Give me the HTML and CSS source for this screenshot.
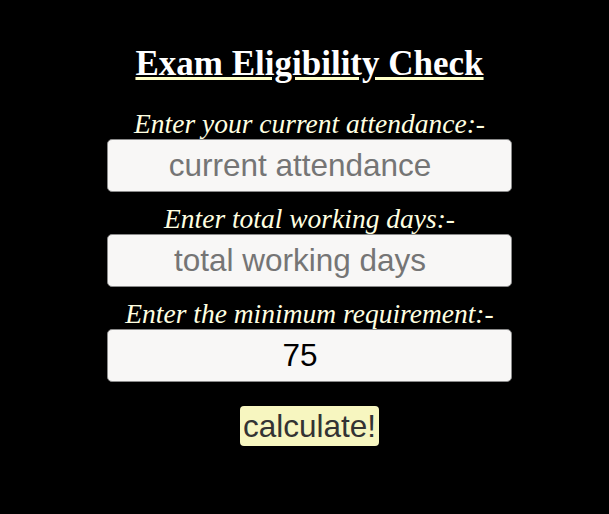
FILE: index.html
```html
<!DOCTYPE html>
<html>
<head>
<meta charset="utf-8">
<link rel="stylesheet" href="styles.css">
</head>
<body>
<div class="page">
  <h1 class="title">Exam Eligibility Check</h1>
  <label class="label">Enter your current attendance:-</label>
  <input class="field" type="text" placeholder="current attendance">
  <label class="label">Enter total working days:-</label>
  <input class="field" type="text" placeholder="total working days">
  <label class="label">Enter the minimum requirement:-</label>
  <input class="field" type="text" value="75">
  <button class="btn">calculate!</button>
</div>
</body>
</html>
```

FILE: styles.css
```css
html, body {
  margin: 0;
  padding: 0;
  background: #000;
}
.page {
  display: flex;
  flex-direction: column;
  align-items: center;
  padding: 44px 0 0 10px;
  font-family: "Liberation Serif", "Times New Roman", serif;
}
.title {
  margin: 0 0 25px;
  font-size: 35px;
  font-weight: bold;
  color: #fff;
  text-decoration: underline;
  text-decoration-color: #ffffc8;
  line-height: 40px;
}
.label {
  display: block;
  font-style: italic;
  font-size: 27.5px;
  line-height: 30px;
  color: #ffffe0;
}
.field {
  box-sizing: border-box;
  width: 405px;
  height: 53px;
  margin: 0 0 12px;
  background: #f8f7f6;
  border: 1px solid #8a8a8a;
  border-radius: 5px;
  font-family: "Liberation Sans", Arial, sans-serif;
  font-size: 31.5px;
  text-align: center;
  color: #000;
  padding: 0 21px 0 2px;
}
.field::placeholder {
  color: #757575;
}
.btn {
  margin-top: 12px;
  background: #f7f6c0;
  border: none;
  border-radius: 4px;
  font-family: "Liberation Sans", Arial, sans-serif;
  font-size: 31.5px;
  color: #333;
  padding: 3px 3px;
  line-height: 34px;
}
```
